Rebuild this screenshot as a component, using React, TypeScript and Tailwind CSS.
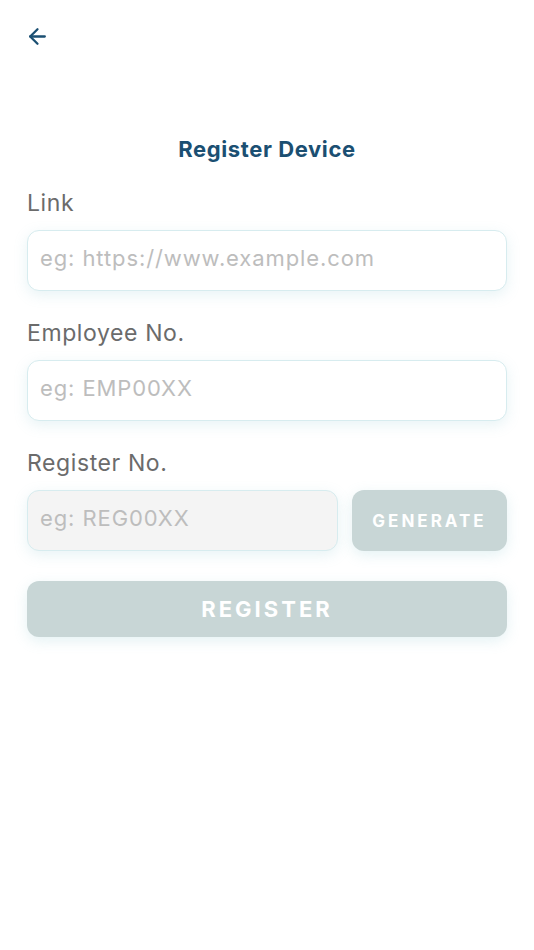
import { ArrowLeft } from "lucide-react";

function Field({ label, placeholder }: { label: string; placeholder: string }) {
  return (
    <div className="flex flex-col">
      <label className="text-[23px] leading-[28px] tracking-[0.6px] text-[#6b6b6b] mb-[13px]">{label}</label>
      <input
        placeholder={placeholder}
        className="h-[61px] w-full rounded-[12px] border border-[#d7ecef] bg-white px-[12px] pb-[5px] text-[22px] tracking-[0.9px] text-gray-700 placeholder:text-[#bdbdbd] shadow-[0_4px_14px_rgba(120,190,200,0.18)] outline-none"
      />
    </div>
  );
}

export default function App() {
  return (
    <div className="min-h-screen w-[534px] bg-white px-[27px]" style={{ fontFamily: "Inter, 'Noto Sans', sans-serif" }}>
      <div className="pt-[24px] h-[60px]">
        <ArrowLeft className="w-[25px] h-[25px] -ml-[2px] text-[#1b4f72]" strokeWidth={2.2} />
      </div>

      <h1 className="mt-[75px] text-center text-[22px] tracking-[0.6px] font-bold text-[#1b4f72] leading-[28px]">Register Device</h1>

      <div className="mt-[26px] flex flex-col gap-[28px]">
        <Field label="Link" placeholder="eg: https://www.example.com" />
        <Field label="Employee No." placeholder="eg: EMP00XX" />
        <div className="flex flex-col">
          <label className="text-[23px] leading-[28px] tracking-[0.6px] text-[#6b6b6b] mb-[13px]">Register No.</label>
          <div className="flex gap-[14px]">
            <input
              disabled
              placeholder="eg: REG00XX"
              className="h-[61px] w-[311px] rounded-[12px] border border-[#d7ecef] bg-[#f4f4f4] px-[12px] pb-[5px] text-[22px] tracking-[0.9px] placeholder:text-[#bdbdbd] shadow-[0_4px_14px_rgba(120,190,200,0.18)] outline-none"
            />
            <button className="h-[61px] flex-1 rounded-[12px] bg-[#c8d6d6] text-[17px] font-bold tracking-[3px] text-white shadow-[0_4px_14px_rgba(120,190,200,0.2)] pt-[2px]">
              GENERATE
            </button>
          </div>
        </div>
      </div>

      <button className="mt-[30px] h-[56px] w-full rounded-[12px] bg-[#c8d6d6] text-[22px] font-bold tracking-[3px] text-white shadow-[0_4px_14px_rgba(120,190,200,0.2)]">
        REGISTER
      </button>
    </div>
  );
}
